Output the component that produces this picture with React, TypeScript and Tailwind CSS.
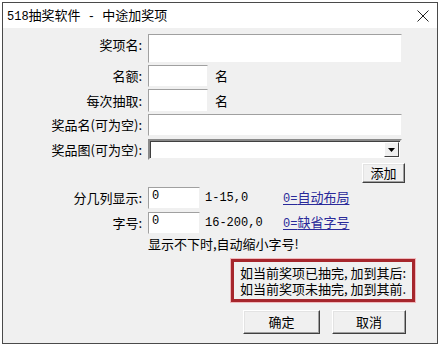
import React from 'react'

const inputCls = 'bg-white border-t border-l border-[#a0a0a0] border-r border-b border-r-[#f0f0f0] border-b-[#f0f0f0]'
const btnCls =
  'flex items-center justify-center bg-[#f0f0f0] border border-t-white border-l-white border-r-[#404040] border-b-[#404040] shadow-[inset_-1px_-1px_0_#a0a0a0,inset_1px_1px_0_#e3e3e3] text-[13px] text-black'
const mono = "font-['Liberation_Mono',monospace] text-[12px]"

function Label({ text, top }: { text: string; top?: boolean }) {
  return (
    <div className={`w-[140px] shrink-0 pr-[1px] text-right text-[13px] leading-[16px] ${top ? 'pt-[3px] self-start' : ''}`}>
      {text}
    </div>
  )
}

export default function App() {
  return (
    <div className="w-[440px] h-[346px] bg-white pt-[2px] pl-[2px] font-['Noto_Sans_CJK_SC',sans-serif] text-black">
      <div className="w-[436px] h-[342px] border border-[#4a4a4a] flex flex-col">
        {/* title bar */}
        <div className="h-[25px] bg-white flex items-center justify-between pl-[4px] pr-[8px]">
          <span className="text-[13px] leading-[16px] whitespace-pre">
            <span className={mono}>518</span>抽奖软件<span className={mono}> - </span>中途加奖项
          </span>
          <svg width="12" height="12" viewBox="0 0 12 12" className="mt-[1px]">
            <path d="M0.5 0.5 L11.5 11.5 M11.5 0.5 L0.5 11.5" stroke="#222" strokeWidth="1" fill="none" />
          </svg>
        </div>

        {/* client area */}
        <div className="flex-1 bg-[#f0f0f0] flex flex-col">
          <div className="flex mt-[6px] gap-[5px]">
            <Label text="奖项名:" top />
            <div className={`${inputCls} w-[254px] h-[29px]`} />
          </div>

          <div className="flex items-center mt-[2px] gap-[5px]">
            <Label text="名额:" />
            <div className={`${inputCls} w-[60px] h-[22px]`} />
            <span className="ml-[2px] text-[13px] leading-[16px]">名</span>
          </div>

          <div className="flex items-center mt-[2px] gap-[5px]">
            <Label text="每次抽取:" />
            <div className={`${inputCls} w-[60px] h-[23px]`} />
            <span className="ml-[2px] text-[13px] leading-[16px]">名</span>
          </div>

          <div className="flex items-center mt-[2px] gap-[5px]">
            <Label text="奖品名(可为空):" />
            <div className={`${inputCls} w-[254px] h-[22px]`} />
          </div>

          <div className="flex items-center mt-[3px] gap-[5px]">
            <Label text="奖品图(可为空):" />
            <div className="w-[254px] h-[21px] bg-white border-2 border-t-[#8a8a8a] border-l-[#8a8a8a] border-r-[#f0f0f0] border-b-[#f0f0f0] shadow-[inset_1px_1px_0_#404040] flex justify-end items-center pr-[1px]">
              <div className="w-[15px] h-[15px] bg-[#f0f0f0] border border-t-white border-l-white border-r-[#404040] border-b-[#404040] flex items-center justify-center">
                <svg width="7" height="4" viewBox="0 0 7 4">
                  <path d="M0 0 H7 L3.5 4 Z" fill="#000" />
                </svg>
              </div>
            </div>
          </div>

          <div className="flex justify-end mt-[3px] pr-[32px]">
            <button className={`${btnCls} w-[43px] h-[20px]`}>添加</button>
          </div>

          <div className="flex items-center mt-[4px] gap-[5px]">
            <Label text="分几列显示:" />
            <div className={`${inputCls} w-[52px] h-[22px] ${mono} leading-[14px] pl-[3px] pt-[1px]`}>0</div>
            <span className={`w-[73px] ${mono} leading-[16px]`}>1-15,0</span>
            <a className="text-[13px] leading-[16px] text-[#2a2a9a] underline underline-offset-2">
              <span className={mono}>0=</span>自动布局
            </a>
          </div>

          <div className="flex items-center mt-[3px] gap-[5px]">
            <Label text="字号:" />
            <div className={`${inputCls} w-[52px] h-[22px] ${mono} leading-[14px] pl-[3px] pt-[1px]`}>0</div>
            <span className={`w-[73px] ${mono} leading-[16px]`}>16-200,0</span>
            <a className="text-[13px] leading-[16px] text-[#2a2a9a] underline underline-offset-2">
              <span className={mono}>0=</span>缺省字号
            </a>
          </div>

          <div className="mt-[2px] pl-[145px] text-[13px] leading-[16px]">显示不下时,自动缩小字号!</div>

          <div className="flex justify-end mt-[7px] pr-[22px]">
            <div className="w-[184px] h-[43px] border-[3px] border-[#a6262c] shadow-[0_0_0_1px_#f0b8bc] flex flex-col justify-center pl-[6px] text-[13px] leading-[16px]">
              <span>如当前奖项已抽完, 加到其后:</span>
              <span>如当前奖项未抽完, 加到其前.</span>
            </div>
          </div>

          <div className="flex justify-end mt-[8px] pr-[31px] gap-[12px]">
            <button className={`${btnCls} w-[77px] h-[24px]`}>确定</button>
            <button className={`${btnCls} w-[74px] h-[24px]`}>取消</button>
          </div>
        </div>
      </div>
    </div>
  )
}
